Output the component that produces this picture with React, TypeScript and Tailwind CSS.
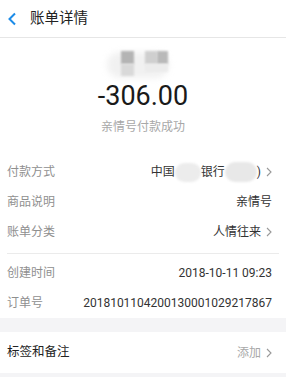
import React from "react";

function Chevron({ className = "" }: { className?: string }) {
    return (
        <svg width="6" height="10" viewBox="0 0 6 10" className={className}>
            <path d="M1 1l4 4-4 4" fill="none" stroke="#999" strokeWidth="1.1" />
        </svg>
    );
}

function Row({ label, children }: { label: string; children: React.ReactNode }) {
    return (
        <div className="h-[30px] flex items-center justify-between pl-[7px] pr-[14px]">
            <span className="text-[12px] text-[#8f8f8f]">{label}</span>
            <div className="flex items-center gap-[5px] text-[12px] text-[#333]">{children}</div>
        </div>
    );
}

export default function App() {
    return (
        <div className="w-[286px] h-[377px] bg-[#f4f4f6] overflow-hidden font-['Roboto','Noto_Sans_CJK_SC',sans-serif]">
            {/* Topbar */}
            <header className="h-[38px] bg-white flex items-center border-b border-[#e6e6e6]">
                <svg width="10" height="14" viewBox="0 0 10 14" className="ml-[7px]">
                    <path d="M8 1.5L2.5 7 8 12.5" fill="none" stroke="#1c8ce8" strokeWidth="2" />
                </svg>
                <h1 className="ml-[13px] text-[14.5px] text-[#222]">账单详情</h1>
            </header>

            <main className="bg-white">
                {/* Summary */}
                <section className="flex flex-col items-center pt-[11px]">
                    <div className="relative w-[64px] h-[30px] -ml-[8px]">
                        <div className="absolute left-0 top-[3px] w-[62px] h-[26px] rounded-full bg-[#f1f1f1] blur-[3px]" />
                        <div className="absolute left-[14px] top-[2px] w-[13px] h-[13px] bg-[#b4b4b4] blur-[1px]" />
                        <div className="absolute left-[14px] top-[15px] w-[13px] h-[12px] bg-[#d9d9d9] blur-[1px]" />
                        <div className="absolute left-[38px] top-[2px] w-[12px] h-[13px] bg-[#cfcfcf] blur-[1px]" />
                        <div className="absolute left-[50px] top-[2px] w-[11px] h-[13px] bg-[#b9b9b9] blur-[1px]" />
                        <div className="absolute left-[38px] top-[15px] w-[23px] h-[8px] bg-[#ececec] blur-[1px]" />
                    </div>
                    <p className="mt-[1px] text-[27px] leading-[32px] text-[#1a1a1a]">-306.00</p>
                    <p className="mt-[8px] text-[12px] leading-[14px] text-[#a8a8a8]">亲情号付款成功</p>
                </section>

                {/* Details */}
                <section className="mt-[23px]">
                    <Row label="付款方式">
                        <span className="flex items-center">
                            中国
                            <span className="inline-block w-[26px] h-[19px] rounded-full bg-[#ececec] blur-[1px]" />
                            银行
                            <span className="inline-block w-[32px] h-[20px] rounded-full bg-[#e8e8e8] blur-[1px]" />
                            )
                        </span>
                        <Chevron />
                    </Row>
                    <Row label="商品说明">
                        <span>亲情号</span>
                    </Row>
                    <Row label="账单分类">
                        <span>人情往来</span>
                        <Chevron />
                    </Row>
                </section>

                <div className="mx-[7px] mt-[6px] border-t border-[#ebebeb]" />

                <section className="pt-[4px]">
                    <Row label="创建时间">
                        <span>2018-10-11 09:23</span>
                    </Row>
                    <Row label="订单号">
                        <span>2018101104200130001029217867</span>
                    </Row>
                </section>
            </main>

            {/* Tags */}
            <section className="mt-[14px] bg-white h-[41px] flex items-center justify-between pl-[7px] pr-[14px]">
                <span className="text-[12.5px] text-[#222]">标签和备注</span>
                <div className="flex items-center gap-[5px] text-[12px] text-[#a8a8a8]">
                    <span>添加</span>
                    <Chevron />
                </div>
            </section>
        </div>
    );
}
